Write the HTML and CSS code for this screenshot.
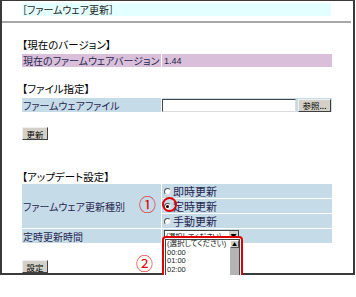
FILE: index.html
```html
<!DOCTYPE html>
<html lang="ja">
<head>
  <meta charset="UTF-8" />
  <title>ファームウェア更新</title>
  <link rel="stylesheet" href="styles.css">
</head>
<body>
  <div class="frame">
    <div class="title">［ファームウェア更新］</div>
    <div class="rule"></div>

    <!-- Current version -->
    <div class="heading">【現在のバージョン】</div>
    <div class="grid">
      <div class="cell label pink">現在のファームウェアバージョン</div>
      <div class="cell value pink num">1.44</div>
    </div>

    <!-- File -->
    <div class="heading">【ファイル指定】</div>
    <div class="grid">
      <div class="cell label blue tall">ファームウェアファイル</div>
      <div class="cell value blue tall file-row">
        <span class="file-box"></span>
        <span class="btn browse">参照...</span>
      </div>
    </div>
    <div class="actions"><span class="btn">更新</span></div>

    <!-- Update settings -->
    <div class="heading settings">【アップデート設定】</div>
    <div class="grid update">
      <div class="cell label blue span3">ファームウェア更新種別</div>
      <div class="cell value blue"><span class="radio"></span>即時更新</div>
      <div class="cell value blue"><span class="radio checked"></span>定時更新</div>
      <div class="cell value blue"><span class="radio"></span>手動更新</div>
      <div class="cell label blue">定時更新時間</div>
      <div class="cell value blue">
        <span class="select"><span class="select-text">(選択してください)</span><span class="arrow">▼</span></span>
      </div>
    </div>
    <div class="actions bottom"><span class="btn">設定</span></div>

    <!-- annotations -->
    <span class="mark mark-1">①</span>
    <span class="ring"></span>
    <span class="mark mark-2">②</span>

    <!-- open dropdown -->
    <div class="dropdown">
      <div class="listbox">
        <ul class="options">
          <li>(選択してください)</li>
          <li>00:00</li>
          <li>01:00</li>
          <li>02:00</li>
          <li>03:00</li>
          <li class="selected">04:00</li>
        </ul>
        <div class="scrollbar">
          <span class="scroll-up">▲</span>
          <span class="thumb"></span>
        </div>
      </div>
    </div>
  </div>
</body>
</html>
```

FILE: styles.css
```css
html,
body {
  overflow: hidden;
}

body {
  margin: 0;
  background-color: #fff;
  font-family: "Noto Sans CJK JP", "Liberation Sans", sans-serif;
  font-size: 10px;
  font-feature-settings: "palt";
  color: #000;
}

.frame {
  position: relative;
  box-sizing: border-box;
  width: 355px;
  height: 275px;
  border: 2px solid #3a3a3a;
  border-top-width: 1px;
  padding-left: 20px;
}

.title {
  margin-top: 2px;
  width: 309px;
  height: 13px;
  line-height: 13px;
  background-color: #e4ffff;
  color: #222;
}

.rule {
  margin: 5px 0 0 -20px;
  width: 349px;
  height: 2px;
  background-color: #a8a8a8;
}

.heading {
  margin-top: 15px;
  height: 13px;
  line-height: 13px;
  color: #000;
  font-size: 10.5px;
}

.heading.settings {
  margin-top: 30px;
}

.grid {
  display: grid;
  grid-template-columns: 139px 170px;
  column-gap: 1px;
  row-gap: 1px;
  margin-top: 3px;
}

.update {
  grid-template-rows: 14px 14px 14px 14px;
  margin-top: 1px;
}

.cell {
  display: flex;
  align-items: center;
  box-sizing: border-box;
  height: 13px;
  color: #262650;
  white-space: nowrap;
  overflow: hidden;
}

.cell.tall {
  height: 14px;
}

.update .cell {
  height: 14px;
}

.label {
  padding-left: 1px;
}

.value {
  padding-left: 2px;
}

.pink {
  background-color: #d9bfd9;
}

.blue {
  background-color: #c6dbe8;
}

.num {
  font-family: "Liberation Sans", sans-serif;
  font-size: 9px;
}

.update .span3 {
  grid-row: span 3;
  height: auto;
}

.file-row {
  padding-left: 0;
  gap: 2px;
}

.file-box {
  box-sizing: border-box;
  width: 134px;
  height: 13px;
  background-color: #fff;
  border: 1px solid #dcdcdc;
  border-top-color: #444;
  border-left-color: #444;
}

.btn {
  display: inline-flex;
  align-items: center;
  justify-content: center;
  box-sizing: border-box;
  height: 13px;
  padding: 0;
  background-color: #d4d0c8;
  border: 1px solid #404040;
  border-top-color: #f0f0f0;
  border-left-color: #f0f0f0;
  font-size: 8.5px;
  color: #000;
  white-space: nowrap;
}

.browse {
  width: 33px;
}

.actions {
  display: flex;
  margin-top: 15px;
  height: 13px;
}

.actions .btn {
  width: 26px;
}

.actions.bottom {
  margin-top: 17px;
}

.radio {
  box-sizing: border-box;
  flex: none;
  width: 7px;
  height: 7px;
  margin-right: 2px;
  border-radius: 50%;
  border: 1px solid #555;
  border-right-color: #ddd;
  border-bottom-color: #ddd;
  background-color: #fff;
  position: relative;
}

.radio.checked::after {
  content: "";
  position: absolute;
  left: 1px;
  top: 1px;
  width: 3px;
  height: 3px;
  border-radius: 50%;
  background-color: #000;
}

.update .value {
  font-size: 11px;
}

.select {
  display: flex;
  box-sizing: border-box;
  width: 75px;
  height: 12px;
  background-color: #fff;
  border: 1px solid #444;
  color: #000;
  overflow: hidden;
}

.select-text {
  flex: 1;
  padding-left: 1px;
  font-size: 7px;
  line-height: 10px;
  overflow: hidden;
  white-space: nowrap;
}

.arrow {
  flex: none;
  width: 9px;
  height: 10px;
  background-color: #d4d0c8;
  font-size: 6px;
  line-height: 10px;
  text-align: center;
}

.mark {
  position: absolute;
  color: #e00000;
  font-size: 17px;
  line-height: 17px;
  font-feature-settings: normal;
}

.mark-1 {
  left: 137px;
  top: 194px;
}

.mark-2 {
  left: 134px;
  top: 253px;
}

.ring {
  position: absolute;
  left: 160px;
  top: 196px;
  width: 11px;
  height: 11px;
  border: 2px solid #e00000;
  border-radius: 50%;
}

.dropdown {
  position: absolute;
  left: 160px;
  top: 235px;
  box-sizing: border-box;
  width: 81px;
  height: 60px;
  padding: 1px;
  border: 2px solid #e00000;
  border-radius: 4px;
  background-color: #fff;
}

.listbox {
  display: flex;
  box-sizing: border-box;
  height: 100%;
  border: 1px solid #444;
  background-color: #fff;
}

.options {
  flex: 1;
  margin: 0;
  padding: 0;
  list-style: none;
  font-family: "Liberation Sans", "Noto Sans CJK JP", sans-serif;
  font-size: 7.5px;
  color: #202020;
  overflow: hidden;
}

.options li {
  height: 8.6px;
  line-height: 8.6px;
  padding-left: 1px;
  white-space: nowrap;
  overflow: hidden;
}

.options li.selected {
  background-color: #0a246a;
  color: #fff;
}

.scrollbar {
  display: flex;
  flex: none;
  flex-direction: column;
  width: 9px;
  background-color: #e8e8e8;
}

.scroll-up {
  height: 8px;
  background-color: #d4d0c8;
  border: 1px solid #fff;
  border-right-color: #555;
  border-bottom-color: #555;
  box-sizing: border-box;
  font-size: 5px;
  line-height: 6px;
  text-align: center;
}

.thumb {
  height: 36px;
  background-color: #b4b4b4;
}
```
